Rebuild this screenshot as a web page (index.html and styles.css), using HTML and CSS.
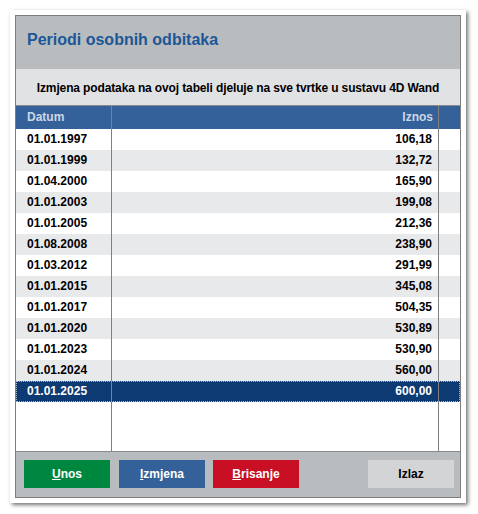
FILE: index.html
```html
<!DOCTYPE html>
<html>
<head>
<meta charset="utf-8">
<link rel="stylesheet" href="styles.css">
</head>
<body>
<div class="frame">
  <div class="dialog">
    <div class="title">Periodi osobnih odbitaka</div>
    <div class="subtitle">Izmjena podataka na ovoj tabeli djeluje na sve tvrtke u sustavu 4D Wand</div>
    <div class="list">
      <div class="row head">
        <div class="c1">Datum</div><div class="c2">Iznos</div><div class="c3"></div>
      </div>
      <div class="row"><div class="c1">01.01.1997</div><div class="c2">106,18</div><div class="c3"></div></div>
      <div class="row alt"><div class="c1">01.01.1999</div><div class="c2">132,72</div><div class="c3"></div></div>
      <div class="row"><div class="c1">01.04.2000</div><div class="c2">165,90</div><div class="c3"></div></div>
      <div class="row alt"><div class="c1">01.01.2003</div><div class="c2">199,08</div><div class="c3"></div></div>
      <div class="row"><div class="c1">01.01.2005</div><div class="c2">212,36</div><div class="c3"></div></div>
      <div class="row alt"><div class="c1">01.08.2008</div><div class="c2">238,90</div><div class="c3"></div></div>
      <div class="row"><div class="c1">01.03.2012</div><div class="c2">291,99</div><div class="c3"></div></div>
      <div class="row alt"><div class="c1">01.01.2015</div><div class="c2">345,08</div><div class="c3"></div></div>
      <div class="row"><div class="c1">01.01.2017</div><div class="c2">504,35</div><div class="c3"></div></div>
      <div class="row alt"><div class="c1">01.01.2020</div><div class="c2">530,89</div><div class="c3"></div></div>
      <div class="row"><div class="c1">01.01.2023</div><div class="c2">530,90</div><div class="c3"></div></div>
      <div class="row alt"><div class="c1">01.01.2024</div><div class="c2">560,00</div><div class="c3"></div></div>
      <div class="row sel"><div class="c1">01.01.2025</div><div class="c2">600,00</div><div class="c3"></div></div>
      <div class="row filler"><div class="c1"></div><div class="c2"></div><div class="c3"></div></div>
    </div>
    <div class="footer">
      <button class="btn green"><u>U</u>nos</button>
      <button class="btn blue"><u>I</u>zmjena</button>
      <button class="btn red"><u>B</u>risanje</button>
      <span class="spacer"></span>
      <button class="btn grey">Izlaz</button>
    </div>
  </div>
</div>
</body>
</html>
```

FILE: styles.css
```css
html, body {
  margin: 0;
  padding: 0;
  background: #ffffff;
}
body {
  font-family: "Liberation Sans", Arial, sans-serif;
  padding: 10px 0 0 10px;
  width: 478px;
  height: 514px;
  box-sizing: border-box;
}
.frame {
  width: 456px;
  height: 493px;
  box-sizing: border-box;
  padding: 5px;
  background: #ffffff;
  box-shadow: 2px 2px 4px rgba(0,0,0,0.55);
}
.dialog {
  width: 446px;
  height: 483px;
  box-sizing: border-box;
  border: 1px solid #7e7e7e;
  display: flex;
  flex-direction: column;
}
.title {
  height: 53px;
  background: #b9bcbf;
  color: #1b5796;
  font-size: 16px;
  font-weight: bold;
  padding: 15px 0 0 11px;
  box-sizing: border-box;
}
.subtitle {
  height: 37px;
  background: #e1e2e4;
  border-bottom: 1px solid #8a8a8a;
  box-sizing: border-box;
  font-size: 12px;
  font-weight: bold;
  color: #000;
  text-align: center;
  padding-top: 12px;
  letter-spacing: -0.13px;
}
.list {
  flex: 1;
  display: flex;
  flex-direction: column;
}
.row {
  display: flex;
  height: 21px;
  font-size: 12px;
  font-weight: bold;
  color: #000;
  background: #ffffff;
  line-height: 21px;
}
.row.alt { background: #e8e9eb; }
.row.head {
  height: 23px;
  line-height: 22px;
  background: #35619a;
  color: #cbd7e8;
}
.row.sel {
  background: #0d3a73;
  color: #ffffff;
  outline: 1px dotted #b8b8b8;
  outline-offset: -1px;
}
.row.filler { flex: 1; }
.c1 {
  width: 96px;
  box-sizing: border-box;
  border-right: 1px solid #808080;
  padding-left: 11px;
}
.c2 {
  width: 327px;
  box-sizing: border-box;
  border-right: 1px solid #808080;
  text-align: right;
  padding-right: 6px;
}
.head .c2 { padding-right: 5px; }
.c3 { width: 21px; }
.footer {
  height: 46px;
  background: #b9bcbf;
  border-top: 1px solid #8a8a8a;
  box-sizing: border-box;
  display: flex;
  align-items: flex-start;
  padding: 8px 6px 0 8px;
  gap: 9px;
}
.spacer { flex: 1; }
.btn {
  width: 86px;
  height: 28px;
  border: none;
  margin: 0;
  padding: 0;
  font-family: "Liberation Sans", Arial, sans-serif;
  font-size: 12px;
  font-weight: bold;
  color: #ffffff;
}
.btn.green { background: #00873f; }
.btn.blue { background: #35619a; }
.btn.red { background: #c80f23; margin-left: -1px; }
.btn.grey { background: #d3d4d6; color: #000; }
```
